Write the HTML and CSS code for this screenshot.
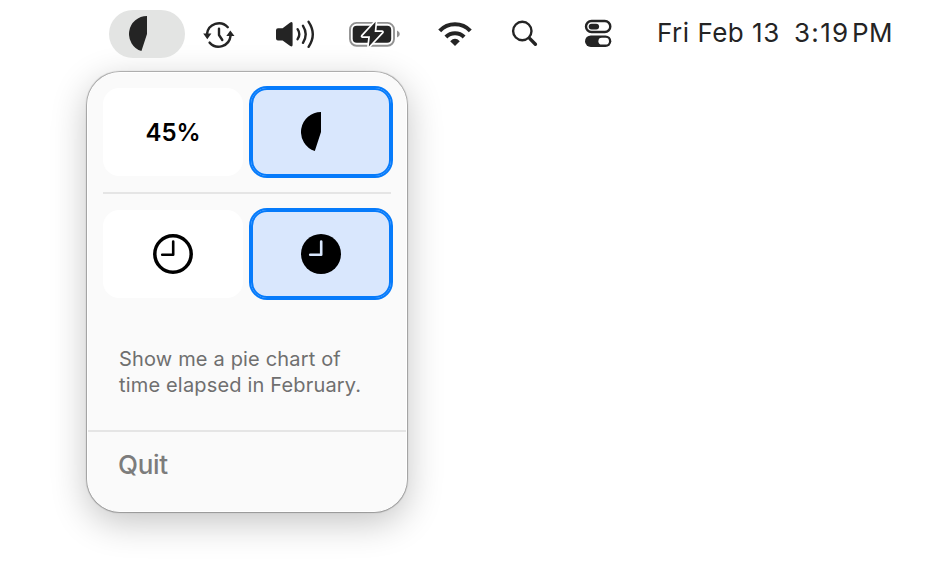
FILE: index.html
```html
<!DOCTYPE html>
<html lang="en">
<head>
  <meta charset="UTF-8" />
  <meta name="viewport" content="width=device-width, initial-scale=1.0"/>
  <title>Month Progress</title>
  <link rel="stylesheet" href="styles.css">
</head>
<body>
  <div class="menubar">
    <button class="status-item active">
      <svg class="icon-pie" width="36" height="36" viewBox="0 0 36 36"><path d="M18 18V0A18 18 0 0 0 12.44 35.12Z"/></svg>
    </button>

    <!-- Time Machine -->
    <svg class="icon-backup" width="34" height="32" viewBox="0 -2 34 32">
      <path class="line" d="M5 14A12 12 0 0 1 25.8 7.2M28.5 16A12 12 0 0 1 7.6 22.6M17 8.6V15L20.3 20"/>
      <path d="M1.2 13.6H9.4L5.3 19.2ZM24.3 16H32.5L28.3 10.4Z"/>
    </svg>

    <!-- Volume -->
    <svg class="icon-volume" width="44" height="32" viewBox="0 0 44 32">
      <path d="M4 10.2H8.6L16.2 4.4Q18.6 3 18.6 5.6V26.8Q18.6 29.4 16.2 28L8.6 22.4H4Q2 22.4 2 20.4V12.2Q2 10.2 4 10.2Z"/>
      <path class="line" d="M23.6 11.2Q27 16.2 23.6 21.2M29 7.8Q34.4 16.2 29 24.8M34.6 3.8Q43 16.2 34.6 28.8"/>
    </svg>

    <!-- Battery, charging -->
    <svg class="icon-battery" width="54" height="32" viewBox="0 0 54 32">
      <rect class="shell" x="2" y="4.9" width="44" height="22.8" rx="6.6"/>
      <rect x="4.7" y="7.8" width="38.5" height="17" rx="4"/>
      <path class="cap" d="M49 12.6Q51.8 13.8 51.8 16.1Q51.8 18.4 49 19.6Z"/>
      <path class="bolt" d="M27.6 3.8L14.4 18.2H22L20.8 28.4L34.2 14H26.6Z"/>
    </svg>

    <!-- Wi-Fi -->
    <svg class="icon-wifi" width="38" height="32" viewBox="0 0 38 32">
      <path class="band" d="M3.7 12.9A21 21 0 0 1 34.3 12.9M9.9 19A12.8 12.8 0 0 1 28.1 19"/>
      <path d="M19 28L14.2 23.2Q19 18.4 23.8 23.2Z"/>
    </svg>

    <!-- Spotlight -->
    <svg class="icon-search" width="30" height="32" viewBox="0 0 30 32">
      <circle class="line" cx="12.3" cy="13" r="9.2"/>
      <path class="handle" d="M19.6 20.4L25.4 26.2"/>
    </svg>

    <!-- Control Center -->
    <svg class="icon-control" width="28" height="32" viewBox="0 0 28 32">
      <rect class="line" x="2" y="3" width="24.3" height="11" rx="5.5"/>
      <rect x="4.7" y="5.7" width="10.4" height="5.8" rx="2.9"/>
      <rect x="1" y="17.4" width="26.3" height="11.6" rx="5.8"/>
      <rect class="knob" x="14.4" y="19.8" width="10.6" height="6.8" rx="3.4"/>
    </svg>

    <div class="clock">
      <span class="date">Fri Feb 13</span>
      <span class="time">3:19</span>
      <span class="period">PM</span>
    </div>
  </div>

  <div class="popover">
    <div class="options">
      <button class="option">45%</button>
      <button class="option selected">
        <svg width="40" height="40" viewBox="0 0 40 40"><path d="M20 20V0A20 20 0 0 0 13.82 39.02Z"/></svg>
      </button>
    </div>
    <div class="divider"></div>
    <div class="options">
      <button class="option">
        <svg width="40" height="40" viewBox="0 0 40 40">
          <circle class="ring" cx="20" cy="20" r="18.2"/>
          <path class="hands" d="M20.2 7.6V20.8H9.2"/>
        </svg>
      </button>
      <button class="option selected">
        <svg width="40" height="40" viewBox="0 0 40 40">
          <circle cx="20" cy="20" r="20"/>
          <path class="hands light" d="M20.2 7.6V20.8H9.2"/>
        </svg>
      </button>
    </div>
    <p class="description">Show me a pie chart of<br>time elapsed in February.</p>
    <button class="quit">Quit</button>
  </div>
</body>
</html>
```

FILE: styles.css
```css
* {
  box-sizing: border-box;
  margin: 0;
  padding: 0;
}

body {
  font-family: Inter, sans-serif;
  background: #fff;
  height: 578px;
  overflow: hidden;
}

button {
  font-family: inherit;
  border: none;
  background: none;
}

svg {
  display: block;
  flex-shrink: 0;
}

/* Menu bar */
.menubar {
  display: flex;
  align-items: center;
  height: 68px;
  padding-left: 109px;
  fill: #242424;
  color: #242424;
}

.status-item {
  width: 76px;
  height: 48px;
  padding-left: 20px;
  border-radius: 24px;
}

.status-item.active {
  background: #e3e4e3;
}

.line {
  fill: none;
  stroke: #242424;
  stroke-width: 2.4;
  stroke-linecap: round;
  stroke-linejoin: round;
}

.icon-backup {
  margin-left: 17px;
}

.icon-volume {
  margin-left: 38px;
}

.icon-battery {
  margin-left: 30px;
}

.icon-wifi {
  margin-left: 34px;
}

.icon-search {
  margin-left: 36px;
}

.icon-control {
  margin-left: 44px;
}

.shell {
  fill: none;
  stroke: #929292;
  stroke-width: 1.9;
}

.cap {
  fill: #929292;
}

.bolt {
  stroke: #fff;
  stroke-width: 3.4;
  stroke-linejoin: round;
  paint-order: stroke;
}

.band {
  fill: none;
  stroke: #242424;
  stroke-width: 4;
}

.handle {
  stroke: #242424;
  stroke-width: 3.4;
  stroke-linecap: round;
}

.knob {
  fill: #fff;
}

.clock {
  display: flex;
  margin: -2px 0 0 45px;
  font-size: 26px;
  line-height: 32px;
  white-space: nowrap;
}

.date {
  width: 122px;
  letter-spacing: 0.5px;
}

.time {
  width: 57px;
  margin-left: 15px;
  letter-spacing: 1.3px;
}

.period {
  margin-left: 1px;
  letter-spacing: 0.3px;
}

/* Popover */
.popover {
  display: flex;
  flex-direction: column;
  width: 320px;
  height: 440px;
  margin: 4px 0 0 87px;
  padding-top: 16px;
  background: #fafafa;
  border: 1px solid #fff;
  border-radius: 33px;
  box-shadow: 0 0 1px 1px rgba(0, 0, 0, 0.3), 0 10px 36px rgba(0, 0, 0, 0.24);
}

.options {
  display: flex;
  gap: 8px;
  margin: -1px 15px 0;
}

.option {
  display: flex;
  align-items: center;
  justify-content: center;
  width: 140px;
  height: 88px;
  background: #fff;
  border-radius: 16px;
  font-size: 24px;
  font-weight: 600;
  color: #000;
}

.option.selected {
  background: #d9e7fd;
  box-shadow: 0 0 0 2px #067bfb, inset 0 0 0 2px #067bfb;
}

.divider {
  height: 2px;
  margin: 16px 15px 17px;
  background: #e5e5e5;
}

.ring {
  fill: none;
  stroke: #000;
  stroke-width: 3.5;
}

.hands {
  fill: none;
  stroke: #000;
  stroke-width: 2.6;
  stroke-linecap: round;
  stroke-linejoin: round;
}

.hands.light {
  stroke: #d9e7fd;
}

.description {
  margin: 48px 31px 0;
  font-size: 20px;
  line-height: 26px;
  letter-spacing: 0.17px;
  color: #6f6f6f;
}

.quit {
  margin-top: auto;
  height: 81px;
  padding: 0 30px 14px;
  border-top: 2px solid #e5e5e5;
  border-radius: 0 0 32px 32px;
  font-size: 26px;
  font-weight: 500;
  letter-spacing: -0.3px;
  text-align: left;
  color: #7c7c7c;
}
```
